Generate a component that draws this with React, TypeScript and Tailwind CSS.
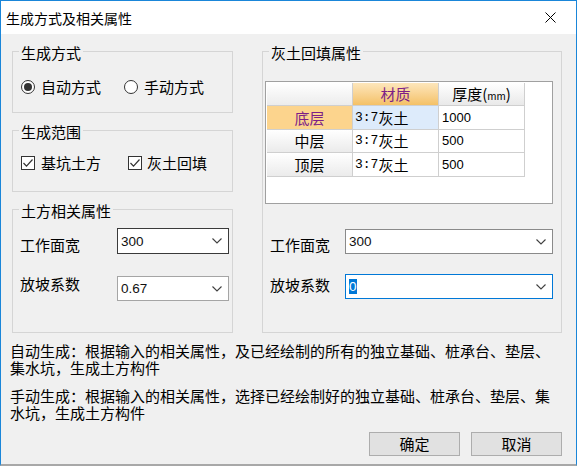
import React from "react";

function Chevron() {
  return (
    <svg width="10" height="6" viewBox="0 0 10 6" className="shrink-0">
      <polyline points="0.5,0.5 5,5 9.5,0.5" fill="none" stroke="#404040" strokeWidth="1.1" />
    </svg>
  );
}

function Combo({
  value,
  className,
  selected,
}: {
  value: string;
  className: string;
  selected?: boolean;
}) {
  return (
    <div className={`flex items-center justify-between bg-white border pl-[3px] pr-[6px] ${className}`}>
      {selected ? (
        <span className="bg-[#0078d7] text-white font-['Liberation_Sans',sans-serif] text-[13.5px] leading-[15px]">
          {value}
        </span>
      ) : (
        <span className="text-[#111] font-['Liberation_Sans',sans-serif] text-[13.5px] leading-[15px]">{value}</span>
      )}
      <Chevron />
    </div>
  );
}

function Group({
  title,
  className,
  children,
}: {
  title: string;
  className: string;
  children?: React.ReactNode;
}) {
  return (
    <div className={`relative border border-[#d5d5d5] ${className}`}>
      <span className="absolute left-[6px] -top-[8px] px-[2px] bg-[#f0f0f0] text-[15px] leading-[18px] whitespace-nowrap">
        {title}
      </span>
      {children}
    </div>
  );
}

function Radio({ checked }: { checked?: boolean }) {
  return (
    <span className="w-[14px] h-[14px] rounded-full border border-[#333] bg-white flex items-center justify-center shrink-0">
      {checked && <span className="w-[8px] h-[8px] rounded-full bg-[#333]" />}
    </span>
  );
}

function Check() {
  return (
    <span className="w-[14px] h-[14px] border border-[#333] bg-white flex items-center justify-center shrink-0">
      <svg width="12" height="12" viewBox="0 0 12 12">
        <polyline points="1.5,6 4.5,9.2 10.5,2.5" fill="none" stroke="#333" strokeWidth="1.2" />
      </svg>
    </span>
  );
}

const cell = "border-r border-b border-[#cfcfcf] flex items-center";

export default function App() {
  return (
    <div className="w-[577px] h-[466px] bg-[#f0f0f0] border-x border-t border-[#1a86d9] border-b-2 border-b-[#a8a8a8] flex flex-col font-['Noto_Sans_CJK_SC',sans-serif] text-black overflow-hidden">
      {/* Title bar */}
      <div className="h-[33px] shrink-0 bg-white flex items-center justify-between pl-[5px] pr-[20px]">
        <span className="text-[14px] leading-[18px]">生成方式及相关属性</span>
        <svg width="11" height="11" viewBox="0 0 11 11">
          <line x1="0.5" y1="0.5" x2="10.5" y2="10.5" stroke="#000" strokeWidth="1" />
          <line x1="10.5" y1="0.5" x2="0.5" y2="10.5" stroke="#000" strokeWidth="1" />
        </svg>
      </div>

      {/* Body */}
      <div className="flex-1 flex flex-col">
        <div className="flex pl-[11px] gap-[29px]">
          {/* Left column */}
          <div className="w-[221px] flex flex-col">
            <Group title="生成方式" className="h-[62px] mt-[17px]">
              <div className="flex items-center h-[20px] mt-[25px] pl-[8px] text-[15px] leading-[18px]">
                <Radio checked />
                <span className="ml-[6px]">自动方式</span>
                <span className="ml-[23px]">
                  <Radio />
                </span>
                <span className="ml-[6px]">手动方式</span>
              </div>
            </Group>
            <Group title="生成范围" className="h-[62px] mt-[17px]">
              <div className="flex items-center h-[20px] mt-[22px] pl-[8px] text-[15px] leading-[18px]">
                <Check />
                <span className="ml-[6px]">基坑土方</span>
                <span className="ml-[27px]">
                  <Check />
                </span>
                <span className="ml-[5px]">灰土回填</span>
              </div>
            </Group>
            <Group title="土方相关属性" className="h-[124px] mt-[17px]">
              <div className="flex items-start mt-[18px] pl-[7px] text-[15px] leading-[18px]">
                <span className="w-[97px] pt-[8px]">工作面宽</span>
                <Combo value="300" className="w-[112px] h-[26px] border-[#3a3a3a]" />
              </div>
              <div className="flex items-start mt-[22px] pl-[7px] text-[15px] leading-[18px]">
                <span className="w-[97px] -mt-[1px]">放坡系数</span>
                <Combo value="0.67" className="w-[112px] h-[25px] border-[#a5a5a5]" />
              </div>
            </Group>
          </div>

          {/* Right column */}
          <div className="w-[300px] flex flex-col">
            <Group title="灰土回填属性" className="h-[282px] mt-[17px]">
              <div className="ml-[2px] mt-[29px] w-[288px] h-[123px] border border-[#a0a0a0] bg-white p-[1px]">
                <div className="grid grid-cols-[86px_86px_86px] grid-rows-[23px_24px_23px_24px] text-[15px] leading-[18px]">
                  <div className={`${cell} bg-linear-to-b from-white to-[#ececec]`} />
                  <div className={`${cell} justify-center bg-linear-to-b from-[#fde6bb] to-[#f4c166] text-[#7d1f87]`}>材质</div>
                  <div className={`${cell} justify-center bg-linear-to-b from-white to-[#e9e9e9]`}>
                    厚度(<span className="text-[10px] leading-[10px] mt-[3px]">mm</span>)
                  </div>

                  <div className={`${cell} justify-center bg-[#fcd48d] text-[#7d1f87]`}>底层</div>
                  <div className={`${cell} bg-[#ddebfb] pl-[2px]`}>
                    <span className="font-['Liberation_Mono',monospace] text-[13px]">3:7</span>灰土
                  </div>
                  <div className={`${cell} pl-[3px] font-['Liberation_Sans',sans-serif] text-[13px]`}>1000</div>

                  <div className={`${cell} justify-center bg-linear-to-b from-white to-[#ebebeb]`}>中层</div>
                  <div className={`${cell} pl-[2px]`}>
                    <span className="font-['Liberation_Mono',monospace] text-[13px]">3:7</span>灰土
                  </div>
                  <div className={`${cell} pl-[3px] font-['Liberation_Sans',sans-serif] text-[13px]`}>500</div>

                  <div className={`${cell} justify-center bg-linear-to-b from-white to-[#ebebeb]`}>顶层</div>
                  <div className={`${cell} pl-[2px]`}>
                    <span className="font-['Liberation_Mono',monospace] text-[13px]">3:7</span>灰土
                  </div>
                  <div className={`${cell} pl-[3px] font-['Liberation_Sans',sans-serif] text-[13px]`}>500</div>
                </div>
              </div>
              <div className="flex items-start mt-[25px] pl-[7px] text-[15px] leading-[18px]">
                <span className="w-[75px] pt-[7px]">工作面宽</span>
                <Combo value="300" className="w-[208px] h-[25px] border-[#8a8a8a]" />
              </div>
              <div className="flex items-start mt-[20px] pl-[7px] text-[15px] leading-[18px]">
                <span className="w-[75px] pt-[2px]">放坡系数</span>
                <Combo value="0" selected className="w-[208px] h-[25px] border-[#0078d7]" />
              </div>
            </Group>
          </div>
        </div>

        {/* Description */}
        <div className="mt-[9px] pl-[9px] text-[15px] leading-[17px] whitespace-nowrap">
          <div className="h-[17px]">自动生成：根据输入的相关属性，及已经绘制的所有的独立基础、桩承台、垫层、</div>
          <div className="h-[17px]">集水坑，生成土方构件</div>
          <div className="h-[17px] mt-[11px]">手动生成：根据输入的相关属性，选择已经绘制好的独立基础、桩承台、垫层、集</div>
          <div className="h-[17px]">水坑，生成土方构件</div>
        </div>

        {/* Buttons */}
        <div className="flex justify-end gap-[11px] pr-[14px] mt-[11px]">
          <button className="w-[91px] h-[24px] bg-[#e1e1e1] border border-[#adadad] text-[15px] leading-[18px] flex items-center justify-center">
            确定
          </button>
          <button className="w-[91px] h-[24px] bg-[#e1e1e1] border border-[#adadad] text-[15px] leading-[18px] flex items-center justify-center">
            取消
          </button>
        </div>
      </div>
    </div>
  );
}
